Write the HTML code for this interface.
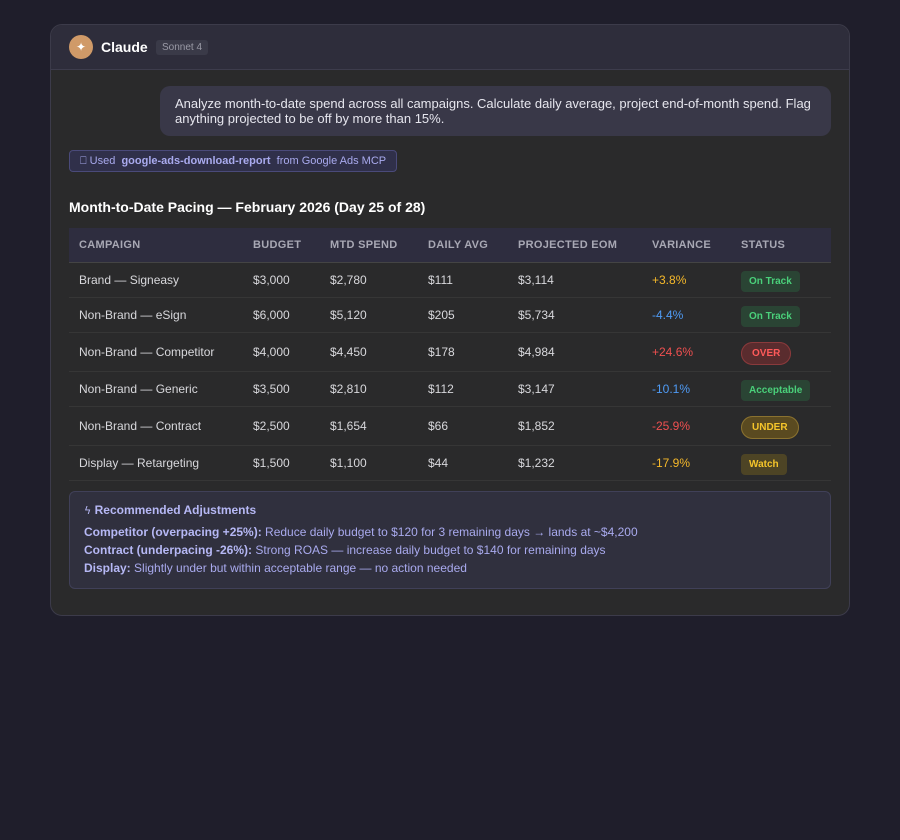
<!DOCTYPE html><html><head><style>
body{margin:0;background:#1f1e2b;font-family:"Liberation Sans",sans-serif;width:900px;height:840px;overflow:hidden}
.card{position:absolute;left:50px;top:24px;width:798px;height:590px;background:#2a2a2b;border:1px solid #3c3b4a;border-radius:12px;overflow:hidden}
.hdr{height:44px;background:#2e2d3b;border-bottom:1px solid #3d3c4c;position:relative}
.av{position:absolute;left:18px;top:10px;width:24px;height:24px;border-radius:50%;background:#d09a68;color:#fff;font-size:12px;text-align:center;line-height:24px}
.nm{position:absolute;left:50px;top:14px;color:#fff;font-weight:bold;font-size:14px}
.sn{position:absolute;left:105px;top:15px;background:#3a3a48;color:#9a9aa6;font-size:10px;padding:2px 6px;border-radius:3px}
.msg{position:absolute;left:109px;top:61px;width:641px;padding:10px 15px;background:#393848;border-radius:10px;color:#e6e6ee;font-size:13px;line-height:15px}
.tool{position:absolute;left:18px;top:125px;height:20px;padding:0 10px;border:1px solid #4a4a7a;background:#30304a;border-radius:4px;color:#a9aaee;font-size:11px;line-height:20px}
h2{position:absolute;left:18px;top:174px;margin:0;color:#fff;font-size:14px}
table{position:absolute;left:18px;top:203px;width:762px;border-collapse:collapse;font-size:12px;color:#d8d8dc}
th{background:#2e2d3f;color:#a8a8b4;font-size:11px;text-align:left;font-weight:bold;height:34px;padding:0 0 0 10px;border-bottom:1px solid #444;letter-spacing:.3px}
td{padding:0 0 1px 10px;border-bottom:1px solid #363636}
.b{font-size:10px;font-weight:bold;padding:5px 8px;border-radius:4px}
.g{background:#2a4434;color:#4ad07a}
.r{background:#5a2c2e;color:#ff5a5a;border:1px solid #8a3a3c;border-radius:12px;padding:5px 10px}
.u{background:#5a4a20;color:#f5c52a;border:1px solid #8a7230;border-radius:12px;padding:5px 10px}
.w{background:#4d4425;color:#f5c52a}
.y{color:#f5b82a}.bl{color:#4f9bf5}.rd{color:#f05050}
.rec{position:absolute;left:18px;top:466px;width:732px;height:96px;padding:0 14px;background:#30303e;border:1px solid #404058;border-radius:6px;color:#a9aaee;font-size:12px}
.rec b{color:#b6b8f5}
</style></head><body><div class="card">
<div class="hdr"><div class="av">✦</div><div class="nm">Claude</div><div class="sn">Sonnet 4</div></div>
<div class="msg">Analyze month-to-date spend across all campaigns. Calculate daily average, project end-of-month spend. Flag anything projected to be off by more than 15%.</div>
<div class="tool">⎕ Used &nbsp;<b>google-ads-download-report</b>&nbsp; from Google Ads MCP</div>
<h2>Month-to-Date Pacing — February 2026 (Day 25 of 28)</h2>
<table>
<tr><th style="width:164px">CAMPAIGN</th><th style="width:67px">BUDGET</th><th style="width:88px">MTD SPEND</th><th style="width:80px">DAILY AVG</th><th style="width:124px">PROJECTED EOM</th><th style="width:79px">VARIANCE</th><th>STATUS</th></tr>
<tr style="height:35px"><td>Brand — Signeasy</td><td>$3,000</td><td>$2,780</td><td>$111</td><td>$3,114</td><td class="y">+3.8%</td><td><span class="b g">On Track</span></td></tr>
<tr style="height:35px"><td>Non-Brand — eSign</td><td>$6,000</td><td>$5,120</td><td>$205</td><td>$5,734</td><td class="bl">-4.4%</td><td><span class="b g">On Track</span></td></tr>
<tr style="height:39px"><td>Non-Brand — Competitor</td><td>$4,000</td><td>$4,450</td><td>$178</td><td>$4,984</td><td class="rd">+24.6%</td><td><span class="b r">OVER</span></td></tr>
<tr style="height:35px"><td>Non-Brand — Generic</td><td>$3,500</td><td>$2,810</td><td>$112</td><td>$3,147</td><td class="bl">-10.1%</td><td><span class="b g">Acceptable</span></td></tr>
<tr style="height:39px"><td>Non-Brand — Contract</td><td>$2,500</td><td>$1,654</td><td>$66</td><td>$1,852</td><td class="rd">-25.9%</td><td><span class="b u">UNDER</span></td></tr>
<tr style="height:35px"><td>Display — Retargeting</td><td>$1,500</td><td>$1,100</td><td>$44</td><td>$1,232</td><td class="y">-17.9%</td><td><span class="b w">Watch</span></td></tr>
</table>
<div class="rec"><div style="margin-top:11px;font-weight:bold;color:#b6b8f5"><span style="font-family:'DejaVu Sans';font-size:11px;font-weight:normal">ϟ</span> Recommended Adjustments</div>
<div style="margin-top:6px;line-height:18px"><b>Competitor (overpacing +25%):</b> Reduce daily budget to $120 for 3 remaining days → lands at ~$4,200<br><b>Contract (underpacing -26%):</b> Strong ROAS — increase daily budget to $140 for remaining days<br><b>Display:</b> Slightly under but within acceptable range — no action needed</div></div>
</div></body></html>
